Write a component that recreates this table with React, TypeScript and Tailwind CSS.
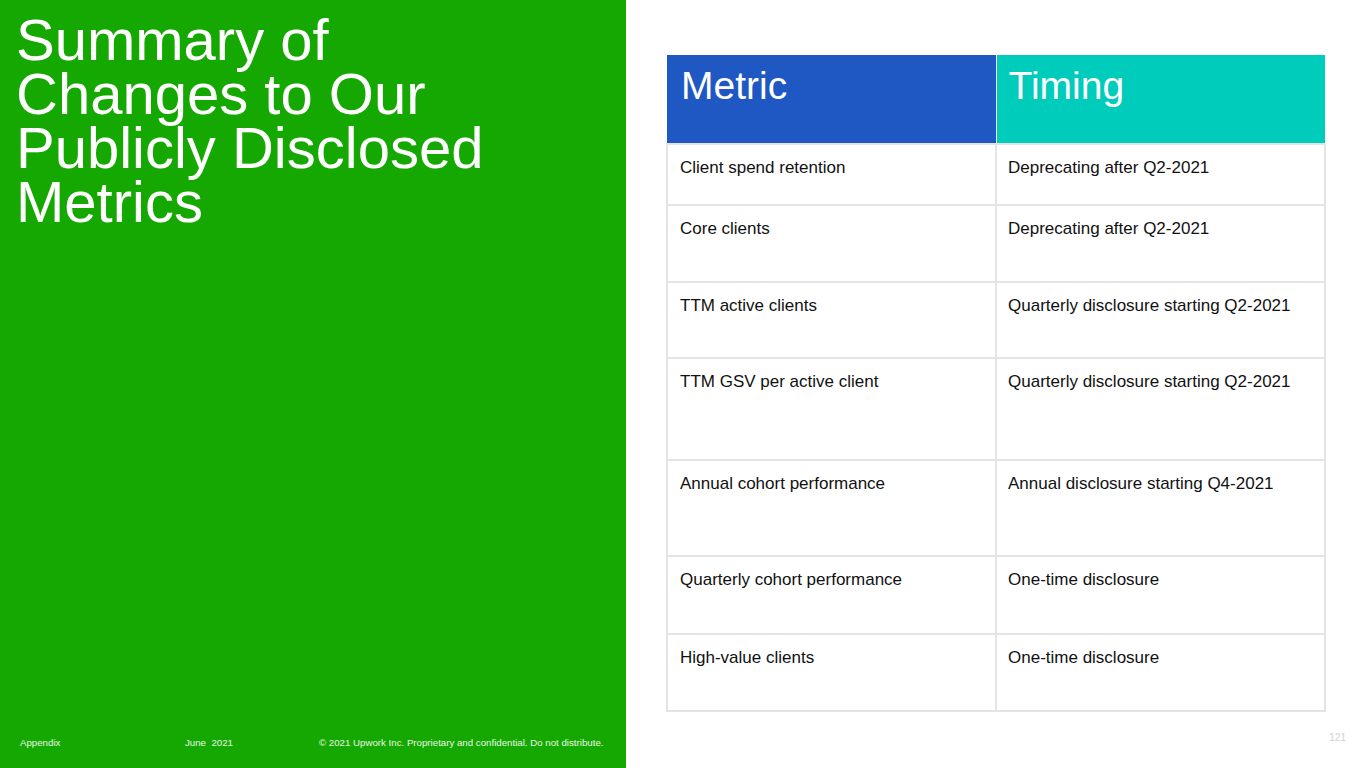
import React from 'react'

const rows: Array<{ metric: string; timing: string; h: string }> = [
  { metric: 'Client spend retention', timing: 'Deprecating after Q2-2021', h: 'h-[61px]' },
  { metric: 'Core clients', timing: 'Deprecating after Q2-2021', h: 'h-[77px]' },
  { metric: 'TTM active clients', timing: 'Quarterly disclosure starting Q2-2021', h: 'h-[76px]' },
  { metric: 'TTM GSV per active client', timing: 'Quarterly disclosure starting Q2-2021', h: 'h-[102px]' },
  { metric: 'Annual cohort performance', timing: 'Annual disclosure starting Q4-2021', h: 'h-[96px]' },
  { metric: 'Quarterly cohort performance', timing: 'One-time disclosure', h: 'h-[78px]' },
  { metric: 'High-value clients', timing: 'One-time disclosure', h: 'h-[77px]' },
]

export default function App() {
  return (
    <div className="flex w-[1366px] h-[768px] overflow-hidden bg-white font-['Liberation_Sans',Arial,sans-serif]">
      {/* Left green panel */}
      <div className="flex flex-col justify-between shrink-0 w-[626px] h-full bg-[#14a800] text-white">
        <h1 className="pl-[16px] pt-[13px] text-[58px] leading-[54px] font-normal">
          Summary of<br />Changes to Our<br />Publicly Disclosed<br />Metrics
        </h1>
        <div className="flex items-center h-[50px] pl-[20px] text-[9.7px] text-white/90">
          <span className="w-[165px]">Appendix</span>
          <span className="w-[134px]">June&nbsp; 2021</span>
          <span>© 2021 Upwork Inc. Proprietary and confidential. Do not distribute.</span>
        </div>
      </div>

      {/* Right table */}
      <div className="flex flex-col flex-1 pt-[55px] pl-[40px] pr-[40px]">
        <table className="w-[658px] border-collapse table-fixed">
          <thead>
            <tr className="h-[89px]">
              <th className="w-[329px] bg-[#1f57c3] border-r border-white text-left align-top pl-[14px] pt-[9px] text-[39px] leading-[44px] font-normal text-white">
                Metric
              </th>
              <th className="w-[329px] bg-[#00ccbc] text-left align-top pl-[12px] pt-[9px] text-[39px] leading-[44px] font-normal text-white">
                Timing
              </th>
            </tr>
          </thead>
          <tbody>
            {rows.map(r => (
              <tr key={r.metric} className={r.h}>
                <td className="border-2 border-[#e3e5e3] align-top pl-[12px] pt-[13px] text-[17px] leading-[20px] text-[#111]">
                  {r.metric}
                </td>
                <td className="border-2 border-[#e3e5e3] align-top pl-[11px] pt-[13px] text-[17px] leading-[20px] text-[#111]">
                  {r.timing}
                </td>
              </tr>
            ))}
          </tbody>
        </table>
        <div className="flex justify-end mt-auto h-[50px] pt-[12px] text-[10px] text-[#d0d0d0]">
          <span className="mr-[-20px]">121</span>
        </div>
      </div>
    </div>
  )
}
